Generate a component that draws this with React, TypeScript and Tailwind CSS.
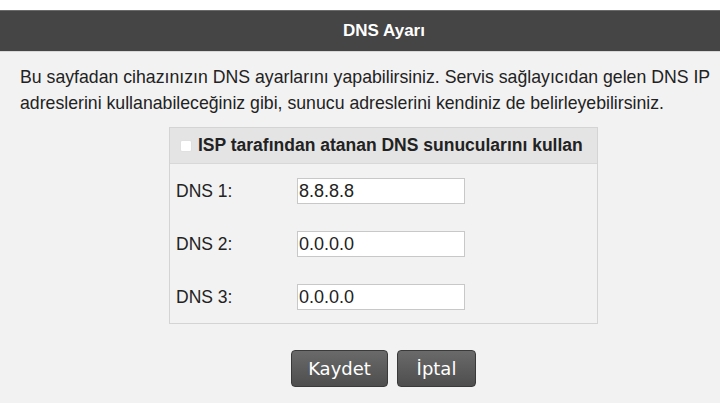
export default function App() {
  const rows = [
    { label: "DNS 1:", value: "8.8.8.8" },
    { label: "DNS 2:", value: "0.0.0.0" },
    { label: "DNS 3:", value: "0.0.0.0" },
  ];
  return (
    <div className="w-[720px] h-[403px] bg-white pt-[10px] overflow-hidden" style={{ fontFamily: '"Liberation Sans", Arial, sans-serif' }}>
      <div className="h-[41px] bg-[#454545] border-t border-[#6a6a6a] flex items-center justify-center pl-[48px]">
        <span className="text-white font-bold text-[17px]">DNS Ayarı</span>
      </div>
      <div className="h-[352px] bg-[#f2f2f2] border-t border-[#d8d8d8] pt-[12px]">
        <p className="text-[17.7px] leading-[26px] text-[#222] pl-[20px] pr-[8px]">
          Bu sayfadan cihazınızın DNS ayarlarını yapabilirsiniz. Servis sağlayıcıdan gelen DNS IP adreslerini kullanabileceğiniz gibi, sunucu adreslerini kendiniz de belirleyebilirsiniz.
        </p>
        <div className="ml-[169px] mt-[11px] w-[429px] border border-[#d4d4d4]">
          <div className="h-[36px] bg-[#e4e4e4] border-b border-[#d8d8d8] flex items-center pl-[10px] gap-[6px]">
            <span className="w-[12px] h-[12px] bg-white rounded-[2px] border border-[#e0e0e0]" />
            <span className="font-bold text-[17.5px] text-[#222]">ISP tarafından atanan DNS sunucularını kullan</span>
          </div>
          <div className="pt-[14px] pb-[13px] flex flex-col gap-[27px]">
            {rows.map((r) => (
              <div key={r.label} className="flex items-center h-[26px]">
                <span className="w-[127px] pl-[6px] text-[17.5px] text-[#222]">{r.label}</span>
                <div className="w-[168px] h-[26px] bg-white border border-[#c8c8c8] flex items-center pl-[1px] text-[18px] text-[#222]">
                  {r.value}
                </div>
              </div>
            ))}
          </div>
        </div>
        <div className="flex justify-center gap-[9px] mt-[26px] pl-[47px]">
          <button className="w-[97px] h-[37px] rounded-[4px] border border-[#3a3a3a] bg-gradient-to-b from-[#6a6a6a] to-[#4e4e4e] text-white text-[18px]" style={{ fontFamily: '"DejaVu Sans", Verdana, sans-serif' }}>Kaydet</button>
          <button className="w-[79px] h-[37px] rounded-[4px] border border-[#3a3a3a] bg-gradient-to-b from-[#6a6a6a] to-[#4e4e4e] text-white text-[18px]" style={{ fontFamily: '"DejaVu Sans", Verdana, sans-serif' }}>İptal</button>
        </div>
      </div>
    </div>
  );
}
